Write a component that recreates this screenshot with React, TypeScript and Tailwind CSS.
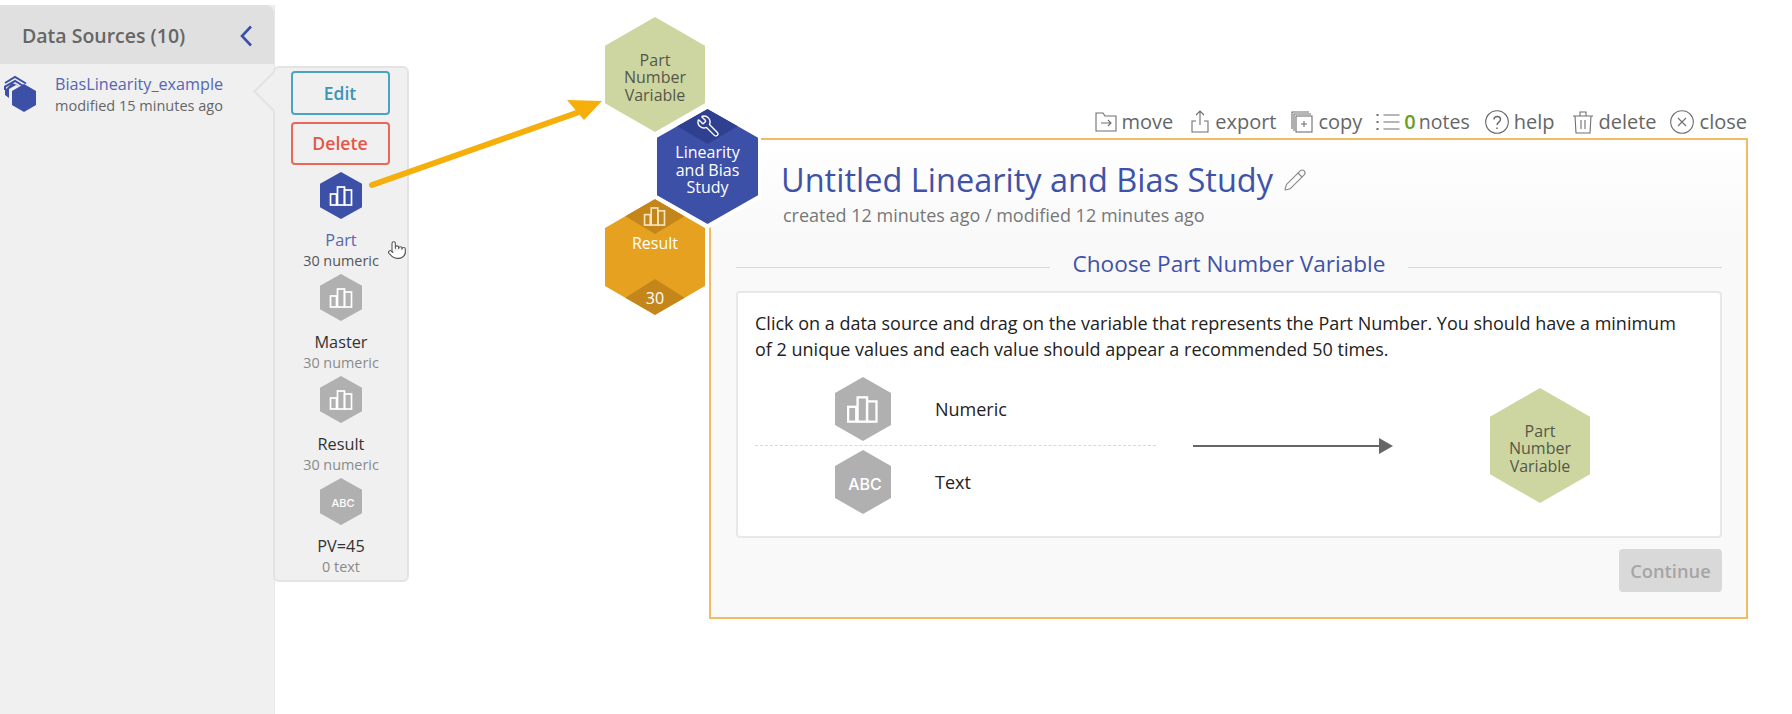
import React from 'react';
import { Pencil, Pointer, Wrench } from 'lucide-react';

const hexClip = '[clip-path:polygon(50%_0,100%_25%,100%_75%,50%_100%,0_75%,0_25%)]';

const Bars = ({ className = '' }: { className?: string }) => (
  <svg viewBox="0 0 24 20" fill="none" stroke="currentColor" strokeWidth="1.7" className={className}>
    <rect x="1" y="8" width="6" height="11" />
    <rect x="8" y="1" width="7" height="18" />
    <rect x="15" y="4" width="7" height="15" />
  </svg>
);

// small grey (or blue) variable hexagon
const VarHex = ({
  size = 'sm',
  kind = 'num',
  active = false,
}: {
  size?: 'sm' | 'lg';
  kind?: 'num' | 'abc';
  active?: boolean;
}) => (
  <div
    className={`${hexClip} flex shrink-0 items-center justify-center text-white ${
      size === 'lg' ? 'h-[64px] w-[56px]' : 'h-[47px] w-[42px]'
    } ${active ? 'bg-[#3d50a8]' : 'bg-[#b0b0b1]'}`}
  >
    {kind === 'num' ? (
      <Bars className={size === 'lg' ? 'h-[27px] w-[34px]' : 'h-[20px] w-[25px]'} />
    ) : (
      <span
        className={`pl-1 pt-1 font-['Inter',sans-serif] font-medium ${
          size === 'lg' ? 'text-[16px]' : 'text-[11px]'
        }`}
      >
        ABC
      </span>
    )}
  </div>
);

const PartHex = ({ className = '' }: { className?: string }) => (
  <div
    className={`${hexClip} flex h-[115px] w-[100px] items-center justify-center bg-[#cdd6a1] pt-[7px] text-center text-[16px] leading-[17.5px] text-[#545748] ${className}`}
  >
    Part
    <br />
    Number
    <br />
    Variable
  </div>
);

const Variable = ({
  name,
  sub,
  kind,
  active,
}: {
  name: string;
  sub: string;
  kind?: 'num' | 'abc';
  active?: boolean;
}) => (
  <div className="flex h-[102px] flex-col items-center">
    <VarHex kind={kind} active={active} />
    <div className={`mt-[11px] text-[16.3px] leading-[20px] ${active ? 'text-[#5566b3]' : 'text-[#333]'}`}>{name}</div>
    <div className={`mt-[1px] text-[14.4px] leading-[20px] ${active ? 'text-[#555]' : 'text-[#8a8a8a]'}`}>{sub}</div>
  </div>
);

const ToolItem = ({ icon, children, className = '' }: { icon: React.ReactNode; children: React.ReactNode; className?: string }) => (
  <div className={`flex items-center ${className}`}>
    {icon}
    <span>{children}</span>
  </div>
);

const iconProps = {
  fill: 'none',
  stroke: '#6f6f6f',
  strokeWidth: 1.1,
  viewBox: '0 0 24 24',
  className: 'h-[24px] w-[24px]',
};

export default function App() {
  return (
    <div className="relative flex h-[714px] w-[1792px] overflow-hidden bg-white font-['Open_Sans',sans-serif]">
      {/* sidebar */}
      <aside className="relative mt-[5px] flex w-[275px] shrink-0 flex-col border-r border-[#e8e8e8] bg-[#f0f0f0]">
        <div className="flex h-[59px] items-center justify-between rounded-tr-lg bg-[#e0e0e0] pl-[22px] pr-[21px] pt-[2px]">
          <span className="text-[19.5px] font-semibold text-[#666]">Data Sources (10)</span>
          <svg viewBox="0 0 14 22" fill="none" stroke="#3d50a8" strokeWidth="2.6" className="h-[22px] w-[14px]">
            <path d="M12 1.5 3 11l9 9.5" />
          </svg>
        </div>
        <div className="flex pl-[4px] pt-[10px]">
          <svg viewBox="0 0 32 38" className="h-[38px] w-[32px] shrink-0">
            <path d="M1 9 11 3l11 6.5" fill="none" stroke="#3d50a8" strokeWidth="2" />
            <path d="M1 16V12.500L11 7l10 6" fill="none" stroke="#3d50a8" strokeWidth="2" />
            <path d="M1 16v5l4 3v-9l7-4 4 1-8-3z" fill="#3d50a8" />
            <path d="M20 10 32 17v14l-12 7-12-7V17z" fill="#3d50a8" />
          </svg>
          <div className="ml-[19px]">
            <div className="text-[16.2px] leading-[21px] text-[#5566b3]">BiasLinearity_example</div>
            <div className="text-[14.5px] leading-[21px] text-[#666]">modified 15 minutes ago</div>
          </div>
        </div>

        {/* variables popover */}
        <div className="absolute left-[273px] top-[61px] z-10 flex h-[516px] w-[136px] flex-col items-center rounded-md border-2 border-[#e3e3e3] bg-[#f0f0f0] pt-[3px]">
          <div className="absolute left-[-16px] top-[9px] h-[29px] w-[29px] rotate-45 border-b-2 border-l-2 border-[#e3e3e3] bg-[#f0f0f0]" />
          <button className="relative h-[44px] w-[99px] -translate-x-px rounded border-2 border-[#4ba3c3] text-[17.5px] font-semibold text-[#3a95b8]">
            Edit
          </button>
          <button className="mt-[7px] h-[43px] w-[99px] -translate-x-px rounded border-2 border-[#e8685a] text-[17.7px] font-semibold text-[#e2574a]">
            Delete
          </button>
          <div className="mt-[7px] flex flex-col">
            <Variable name="Part" sub="30 numeric" active />
            <Variable name="Master" sub="30 numeric" />
            <Variable name="Result" sub="30 numeric" />
            <Variable name="PV=45" sub="0 text" kind="abc" />
          </div>
          <Pointer className="absolute left-[112px] top-[170px] h-[24px] w-[20px] fill-white text-[#555]" strokeWidth={1.3} />
        </div>
      </aside>

      {/* main */}
      <main className="relative flex-1 pl-[434px] pr-[43px] pt-[105px]">
        <div className="flex h-[33px] items-center justify-end pr-[2px] text-[20px] leading-none text-[#666]">
          <ToolItem
            className="gap-[3px]"
            icon={
              <svg {...iconProps}>
                <path d="M2 21V3h7l2 3h11v15z" />
                <path d="M7 13h10m-3-3 3 3-3 3" />
              </svg>
            }
          >
            move
          </ToolItem>
          <ToolItem
            className="ml-[15px] gap-[3px]"
            icon={
              <svg {...iconProps}>
                <path d="M12 15V1M8 5l4-4 4 4" />
                <path d="M8 11H4v11h16V11h-4" />
              </svg>
            }
          >
            export
          </ToolItem>
          <ToolItem
            className="ml-[14px] gap-[4px]"
            icon={
              <svg {...iconProps}>
                <path d="M2 19V2h17M4 21V4h17" />
                <rect x="6" y="6" width="16" height="16" />
                <path d="M14 11v6M11 14h6" />
              </svg>
            }
          >
            copy
          </ToolItem>
          <div className="ml-[13px] flex items-center">
            <svg {...iconProps} className="h-[24px] w-[25px]">
              <path d="M8 5h16M8 12h16M8 19h16" />
              <path d="M1 5h2M1 12h2M1 19h2" strokeWidth="2" />
            </svg>
            <span className="ml-[4px] font-semibold text-[#6a9e1f]">0</span>
            <span className="ml-[3px] text-[19.5px]">notes</span>
          </div>
          <ToolItem
            className="ml-[15px] gap-[5px]"
            icon={
              <svg {...iconProps} stroke="#666">
                <circle cx="12" cy="12" r="11.300" />
                <path d="M9 9.500C9 5.500 15.500 5.500 15.500 9.500c0 2.500-3.500 2.800-3.500 5.500M12 17.500v1.500" strokeWidth="1.4" />
              </svg>
            }
          >
            help
          </ToolItem>
          <ToolItem
            className="ml-[17px] gap-[3px]"
            icon={
              <svg {...iconProps}>
                <path d="M2 6h20M9 6V2h6v4" />
                <path d="M4 6l1 17h14l1-17M10 10v9M14 10v9" />
              </svg>
            }
          >
            delete
          </ToolItem>
          <ToolItem
            className="ml-[13px] gap-[6px]"
            icon={
              <svg {...iconProps}>
                <circle cx="12" cy="12" r="11.300" />
                <path d="m8 8 8 8M16 8l-8 8" />
              </svg>
            }
          >
            close
          </ToolItem>
        </div>

        {/* study panel */}
        <section className="h-[481px] w-[1039px] border-2 border-[#efbb63] bg-gradient-to-b from-white to-[#f9f9f9] to-[20%]">
          <div className="flex items-center pl-[70px] pt-[20px]">
            <h1 className="text-[32.5px] font-normal leading-[40px] text-[#3f52a8]">Untitled Linearity and Bias Study</h1>
            <Pencil className="ml-[10px] h-[24px] w-[24px] text-[#888]" strokeWidth={1.1} />
          </div>
          <div className="pl-[72px] pt-[2px] text-[18px] leading-[26px] text-[#777]">
            created 12 minutes ago / modified 12 minutes ago
          </div>
          <div className="ml-[25px] mr-[24px] mt-[20px] flex items-center gap-[22px]">
            <div className="h-px flex-1 translate-y-[3px] bg-[#d9d9d9]" />
            <span className="text-[22.6px] leading-[32px] text-[#3f52a8]">Choose Part Number Variable</span>
            <div className="h-px flex-1 translate-y-[3px] bg-[#d9d9d9]" />
          </div>
          <div className="ml-[25px] mr-[24px] mt-[11px] h-[247px] rounded border-2 border-[#e8e8e8] bg-white pl-[17px] pt-[17px]">
            <p className="w-[935px] text-[18px] leading-[26px] text-[#222]">
              Click on a data source and drag on the variable that represents the Part Number. You should have a minimum
              of 2 unique values and each value should appear a recommended 50 times.
            </p>
            <div className="mt-[15px] flex items-center">
              <div className="w-[401px]">
                <div className="flex items-center pl-[80px]">
                  <VarHex size="lg" />
                  <span className="ml-[44px] text-[18px] text-[#222]">Numeric</span>
                </div>
                <div className="my-[4px] border-t border-dashed border-[#d8d8d8]" />
                <div className="flex items-center pl-[80px]">
                  <VarHex size="lg" kind="abc" />
                  <span className="ml-[44px] text-[18px] text-[#222]">Text</span>
                </div>
              </div>
              <svg viewBox="0 0 200 18" className="ml-[37px] h-[18px] w-[200px]">
                <path d="M0 9h186" stroke="#666" strokeWidth="2" />
                <path d="M186 1l14 8-14 8z" fill="#666" />
              </svg>
              <PartHex className="ml-[97px]" />
            </div>
          </div>
          <div className="mr-[24px] mt-[11px] flex justify-end">
            <button className="h-[43px] w-[103px] rounded bg-[#d9d9d9] text-[18.3px] font-semibold text-[#a5a5a5]">
              Continue
            </button>
          </div>
        </section>

        {/* workflow nodes sit over the panel corner */}
        <div className="absolute left-[330px] top-[17px] h-[300px] w-[155px]">
          <PartHex className="absolute left-0 top-0" />
          <div
            className={`${hexClip} absolute left-0 top-[182px] h-[116px] w-[100px] bg-[#e5a11f] text-center text-[16px] text-white`}
          >
            <svg viewBox="0 0 100 116" className="absolute inset-0 h-full w-full">
              <path d="M50 0 80 17 50 35 20 17zM50 80l30 19-30 17-30-17z" fill="#c4861a" />
            </svg>
            <Bars className="absolute left-[38px] top-[8px] h-[19px] w-[24px] text-[#f5e6c0]" />
            <div className="absolute inset-x-0 top-[33px] leading-[22px]">Result</div>
            <div className="absolute inset-x-0 top-[88px] leading-[22px]">30</div>
          </div>
          <div className={`${hexClip} absolute left-[49px] top-[89px] h-[123px] w-[107px] bg-white`} />
          <div
            className={`${hexClip} absolute left-[52px] top-[92px] h-[115px] w-[101px] bg-[#3d50a8] text-center text-[16px] leading-[17.5px] text-white`}
          >
            <svg viewBox="0 0 101 115" className="absolute inset-0 h-full w-full">
              <path d="M50.500 0 81 17 50.500 35 20 17z" fill="#2f4090" />
            </svg>
            <Wrench className="absolute left-[39px] top-[5px] h-[24px] w-[24px] -scale-x-100" strokeWidth={1.4} />
            <div className="absolute inset-x-0 top-[35px]">
              Linearity
              <br />
              and Bias
              <br />
              Study
            </div>
          </div>
        </div>
      </main>

      {/* drag arrow */}
      <svg viewBox="0 0 1792 714" className="pointer-events-none absolute inset-0 z-20 h-[714px] w-[1792px]">
        <path d="M372 185 582 111" stroke="#f6ae0b" strokeWidth="6" strokeLinecap="round" />
        <path d="M602 101 567 100 584 120z" fill="#f6ae0b" />
      </svg>
    </div>
  );
}
